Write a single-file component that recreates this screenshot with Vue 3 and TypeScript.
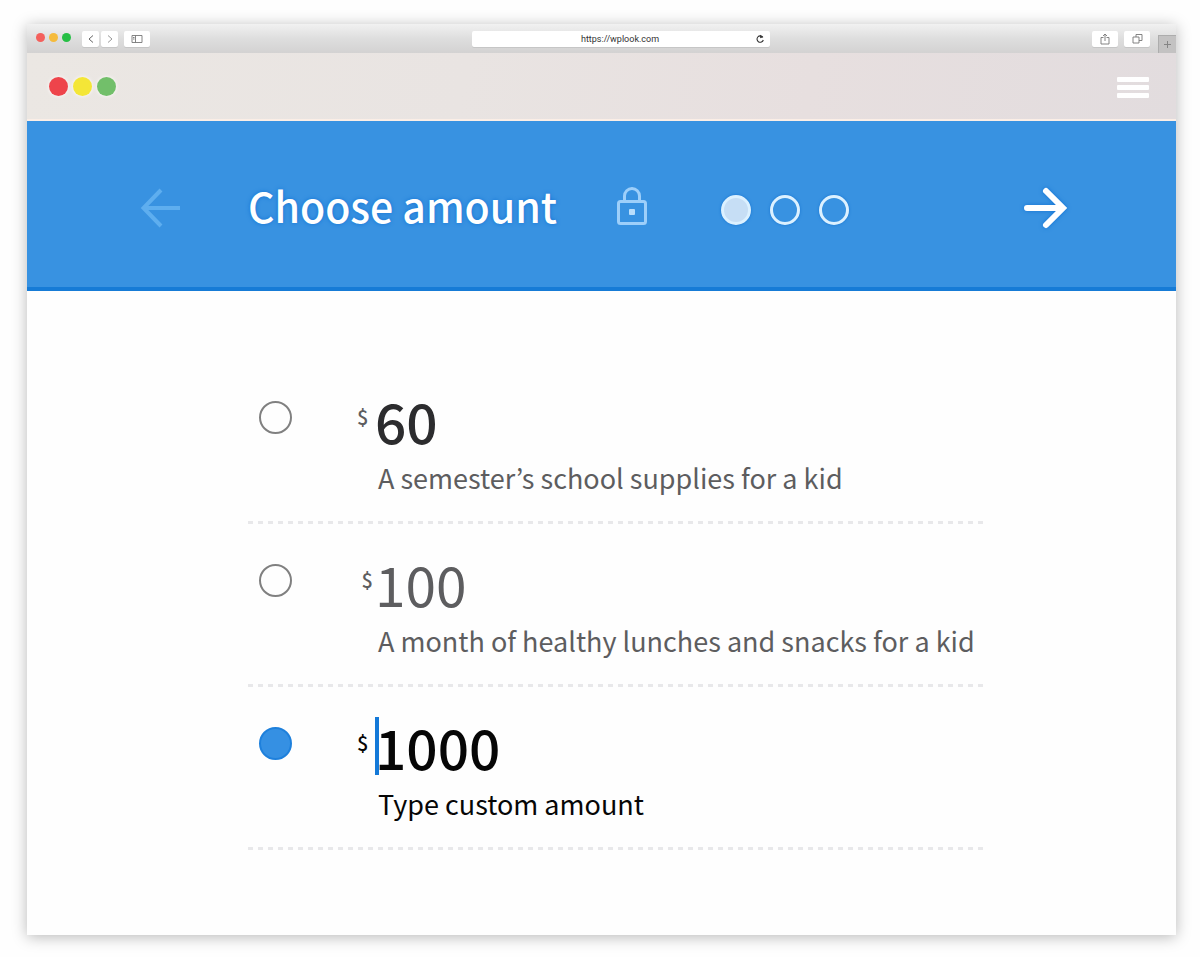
<script setup lang="ts">
import { ref } from 'vue'

interface Preset {
  id: string
  amount: number
  description: string
  tone: string
}

const presets: Preset[] = [
  { id: 'supplies', amount: 60, description: 'A semester’s school supplies for a kid', tone: 'dark' },
  { id: 'lunches', amount: 100, description: 'A month of healthy lunches and snacks for a kid', tone: 'soft' },
]

const steps = ['Choose amount', 'Your details', 'Payment']
const currentStep = ref(0)
const selected = ref('custom')
const customAmount = ref('1000')
const address = ref('https://wplook.com')
</script>

<template>
  <div class="desk">
    <div class="window">
      <div class="toolbar">
        <div class="tools">
          <div class="lights">
            <span class="light red"></span>
            <span class="light amber"></span>
            <span class="light green"></span>
          </div>
          <div class="history">
            <button type="button" class="tool narrow" aria-label="Back">
              <svg width="8" height="10" viewBox="0 0 8 10"><path d="M6 1.5 2 5l4 3.5" fill="none" stroke="#666" stroke-width="1" /></svg>
            </button>
            <button type="button" class="tool narrow" aria-label="Forward">
              <svg width="8" height="10" viewBox="0 0 8 10"><path d="M2 1.5 6 5 2 8.5" fill="none" stroke="#999" stroke-width="1" /></svg>
            </button>
          </div>
          <button type="button" class="tool" aria-label="Sidebar">
            <svg width="12" height="10" viewBox="0 0 12 10"><path d="M1 1.5h10v7H1zM4.5 1.5v7M2 3.5h1.5M2 5h1.5" fill="none" stroke="#777" stroke-width="0.9" /></svg>
          </button>
        </div>
        <div class="address">
          <input v-model="address" type="text" aria-label="Address" />
          <button type="button" aria-label="Reload">
            <svg width="10" height="10" viewBox="0 0 10 10"><path d="M7.8 3.2A3.2 3.2 0 1 0 8.3 6" fill="none" stroke="#333" stroke-width="1.1" /><path d="M5 .8 8.3 3.3 5.2 4.3z" fill="#333" /></svg>
          </button>
        </div>
        <div class="tools right">
          <button type="button" class="tool" aria-label="Share">
            <svg width="10" height="12" viewBox="0 0 10 12"><path d="M3.5 4.5H1V11h8V4.5H6.5M5 8V1.2M3 3l2-2 2 2" fill="none" stroke="#777" stroke-width="0.9" /></svg>
          </button>
          <button type="button" class="tool" aria-label="Tabs">
            <svg width="11" height="11" viewBox="0 0 11 11"><path d="M1 4h6v6H1zM4 4V1.5h6V7.5H7" fill="none" stroke="#777" stroke-width="0.9" /></svg>
          </button>
          <button type="button" class="new-tab" aria-label="New tab">
            <svg width="9" height="9" viewBox="0 0 9 9"><path d="M4.5 1v7M1 4.5h7" fill="none" stroke="#858585" stroke-width="1" /></svg>
          </button>
        </div>
      </div>

      <div class="appbar">
        <div class="balls">
          <span class="ball red"></span>
          <span class="ball yellow"></span>
          <span class="ball green"></span>
        </div>
        <button type="button" class="menu" aria-label="Menu">
          <span></span><span></span><span></span>
        </button>
      </div>

      <header class="header">
        <button type="button" class="arrow" aria-label="Previous step" disabled>
          <svg width="44" height="44" viewBox="0 0 44 44"><path d="M41 22H5M22 4 4.5 22 22 40" fill="none" stroke="#5eaeef" stroke-width="4" /></svg>
        </button>
        <h1>Choose amount</h1>
        <svg class="lock" width="34" height="44" viewBox="0 0 34 44" aria-hidden="true">
          <rect x="3.5" y="15.5" width="27" height="22" rx="2" fill="none" stroke="#9dcffa" stroke-width="3" />
          <path d="M9.5 15v-5a7.5 7.5 0 0 1 15 0v5" fill="none" stroke="#9dcffa" stroke-width="3" />
          <rect x="14" y="23" width="6" height="6" rx="1" fill="#b9defc" />
        </svg>
        <ol class="steps">
          <li v-for="(step, i) in steps" :key="step">
            <button
              type="button"
              class="step"
              :class="{ current: i === currentStep }"
              :aria-label="step"
              @click="currentStep = i"
            ></button>
          </li>
        </ol>
        <button type="button" class="arrow next" aria-label="Next step">
          <svg width="46" height="44" viewBox="0 0 46 44"><path d="M4 22h34M23 5l17 17-17 17" fill="none" stroke="#fff" stroke-width="6" stroke-linecap="round" /></svg>
        </button>
      </header>

      <form class="options" @submit.prevent>
        <div v-for="preset in presets" :key="preset.id" class="option" :class="preset.tone">
          <input :id="preset.id" v-model="selected" class="radio" type="radio" name="amount" :value="preset.id" />
          <label class="choice" :for="preset.id">
            <span class="currency">$</span>
            <span class="amount">{{ preset.amount }}</span>
            <span class="description">{{ preset.description }}</span>
          </label>
        </div>
        <div class="option custom">
          <input v-model="selected" class="radio" type="radio" name="amount" value="custom" aria-label="Custom amount" />
          <div class="choice">
            <span class="currency">$</span>
            <input id="custom-amount" v-model="customAmount" class="amount" type="text" inputmode="numeric" />
            <label class="description" for="custom-amount">Type custom amount</label>
          </div>
        </div>
      </form>
    </div>
  </div>
</template>

<style>
body {
  margin: 0;
  background: #fefefe;
}
</style>

<style scoped>
.desk {
  box-sizing: border-box;
  min-height: 100vh;
  padding: 24px 24px 22px 27px;
  display: flex;
  font-family: "Noto Sans CJK KR", "Noto Sans", sans-serif;
}

.desk *,
.desk *::before {
  box-sizing: border-box;
}

button {
  padding: 0;
  border: 0;
  background: none;
  display: flex;
  align-items: center;
  justify-content: center;
}

.window {
  flex: 1;
  background: #fefefe;
  box-shadow: 0 2px 14px rgba(0, 0, 0, 0.28);
}

.toolbar {
  height: 29px;
  display: flex;
  align-items: center;
  justify-content: space-between;
  background: linear-gradient(#f1f1f1, #dedede 50%, #d3d2d2);
}

.tools {
  display: flex;
  align-items: center;
  gap: 6px;
  padding-left: 9px;
}

.tools.right {
  padding-left: 0;
  align-self: stretch;
}

.lights {
  display: flex;
  gap: 4px;
  padding: 0 5px 3px 0;
}

.light {
  width: 9px;
  height: 9px;
  border-radius: 50%;
}

.light.red { background: #f4605c; }
.light.amber { background: #f5bb3c; }
.light.green { background: #26bf45; }

.history {
  display: flex;
  gap: 2px;
}

.tool {
  width: 26px;
  height: 16px;
  border-radius: 2px;
  background: #fff;
  box-shadow: 0 1px 0 #c6c6c6;
}

.tool.narrow {
  width: 17px;
}

.new-tab {
  align-self: flex-end;
  width: 18px;
  height: 18px;
  margin-left: 2px;
  border: 1px solid #adadad;
  border-width: 1px 0 0 1px;
  background: #c3c2c2;
}

.address {
  width: 298px;
  height: 16px;
  display: flex;
  padding-left: 18px;
  border-radius: 2px;
  background: #fff;
  box-shadow: 0 1px 0 #c6c6c6;
}

.address input {
  flex: 1;
  min-width: 0;
  padding: 0;
  border: 0;
  outline: 0;
  background: none;
  color: #333;
  font-family: Roboto, "Noto Sans", sans-serif;
  font-size: 9px;
  line-height: 16px;
  text-align: center;
}

.address button {
  width: 20px;
}

.appbar {
  height: 68px;
  padding: 0 27px 0 22px;
  display: flex;
  align-items: center;
  justify-content: space-between;
  border-bottom: 2px solid #fbeee6;
  background: linear-gradient(100deg, #ebe7e3, #e9e4e2 38%, #e7dfdf 68%, #e2dcde);
}

.balls {
  display: flex;
  gap: 5px;
}

.ball {
  width: 19px;
  height: 19px;
  border-radius: 50%;
  box-shadow: 0 0 3px 1px #f7f3f1;
}

.ball.red { background: #ee444b; }
.ball.yellow { background: #f4e637; }
.ball.green { background: #72bf6a; }

.menu {
  width: 32px;
  flex-direction: column;
  gap: 3px;
  padding-top: 3px;
}

.menu span {
  width: 32px;
  height: 5px;
  border-radius: 1px;
  background: #fff;
}

.header {
  height: 170px;
  padding: 8px 107px 0 112px;
  display: flex;
  align-items: center;
  border-bottom: 4px solid #167bd6;
  background: #3892e1;
}

h1 {
  margin: 0 0 0 65px;
  padding-bottom: 6px;
  color: #fff;
  font-size: 41px;
  line-height: 60px;
  font-weight: 500;
  text-shadow: 0 0 4px #1373d4;
  white-space: nowrap;
}

.lock {
  margin-left: 58px;
}

.steps {
  display: flex;
  gap: 19px;
  margin: 0 auto 0 72px;
  padding: 4px 0 0;
  list-style: none;
}

.step {
  width: 30px;
  height: 30px;
  border: 3px solid #dcf1ff;
  border-radius: 50%;
  box-shadow: 0 0 3px #1674d2;
}

.step.current {
  background: #c6def5;
}

.next svg {
  filter: drop-shadow(0 0 2px #1373d4);
}

.options {
  max-width: 961px;
  padding: 70px 0 84px 221px;
}

.option {
  width: 740px;
  max-width: 100%;
  height: 163px;
  padding: 30px 0 0 11px;
  display: flex;
  align-items: flex-start;
  background: repeating-linear-gradient(90deg, #e8e8ea 0 5px, transparent 5px 10px) bottom / 100% 3px no-repeat;
}

.radio {
  appearance: none;
  flex: none;
  width: 33px;
  height: 33px;
  margin: 10px 0 0;
  border: 2px solid #808080;
  border-radius: 50%;
}

.radio:checked {
  border-color: #1e80dc;
  background: #3590e3;
}

.choice {
  margin-left: 65px;
  display: grid;
  grid-template-columns: 18px auto;
  color: #5d5d5f;
}

.currency {
  padding-top: 8px;
  font-size: 20px;
  line-height: 36px;
  font-weight: 500;
}

.amount {
  font-size: 55px;
  line-height: 58px;
}

.description {
  grid-column: 2;
  padding: 7px 0 0 3px;
  font-size: 27px;
  line-height: 44px;
  white-space: nowrap;
}

.dark .amount {
  color: #2c2c2e;
  font-weight: 500;
}

.soft .currency {
  padding-right: 2px;
  text-align: right;
}

.custom .choice {
  color: #060606;
}

.custom .amount {
  width: 240px;
  height: 58px;
  padding: 0;
  border: 0;
  outline: 0;
  background: linear-gradient(#1479d8, #1479d8) left / 4px 100% no-repeat;
  color: #060606;
  font-family: inherit;
  font-weight: 500;
}
</style>
